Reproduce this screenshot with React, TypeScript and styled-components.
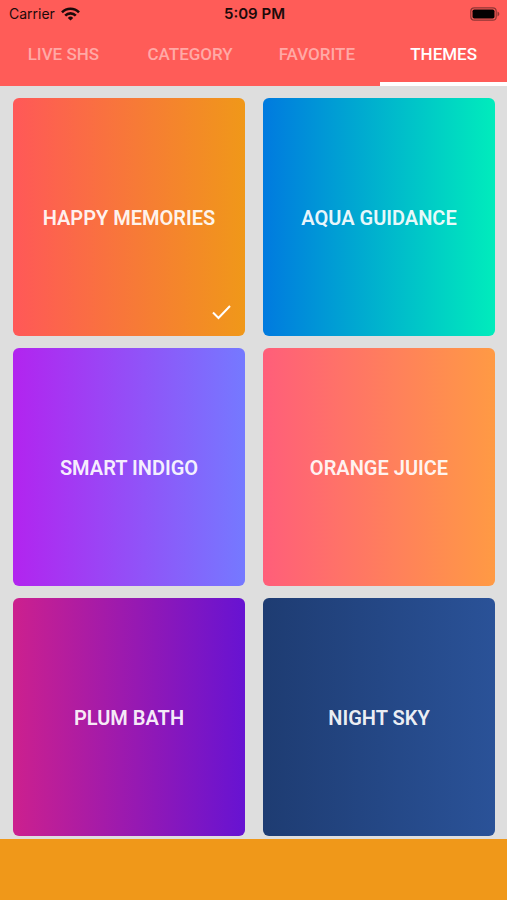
import React, { useState } from "react";
import styled, { createGlobalStyle } from "styled-components";

const GlobalStyle = createGlobalStyle`
  *, *::before, *::after { box-sizing: border-box; }
  body {
    margin: 0;
    background: #dedede;
    font-family: Roboto, "Liberation Sans", sans-serif;
  }
`;

const Screen = styled.div`
  display: flex;
  flex-direction: column;
  min-height: 100vh;
`;

const Header = styled.header`
  background: #ff5c58;
`;

const StatusBar = styled.div`
  display: grid;
  grid-template-columns: 1fr auto 1fr;
  align-items: center;
  height: 27px;
  padding: 0 7px 0 9px;
  color: #1c0a0a;
  font: 400 14px/18px Inter, "Liberation Sans", sans-serif;
`;

const Carrier = styled.div`
  display: flex;
  align-items: center;
  gap: 6px;
`;

const Clock = styled.time`
  font-size: 15px;
  font-weight: 600;
`;

const WifiIcon = styled.svg`
  display: block;
`;

const Battery = styled.svg`
  justify-self: end;
`;

const Tabs = styled.nav`
  display: grid;
  grid-template-columns: repeat(4, 1fr);
`;

const Tab = styled.button<{ $active: boolean }>`
  height: 59px;
  padding: 0 0 1px;
  border: 0;
  border-bottom: 4px solid ${(p) => (p.$active ? "#ffffff" : "transparent")};
  background: none;
  color: ${(p) => (p.$active ? "#ffffff" : "#ffa9a6")};
  font: 500 17px/20px Roboto, "Liberation Sans", sans-serif;
  white-space: nowrap;
  cursor: pointer;
`;

const ThemeGrid = styled.main`
  display: grid;
  flex: 1;
  grid-template-columns: repeat(2, 1fr);
  gap: 12px 18px;
  padding: 12px 12px 3px 13px;
`;

const ThemeCard = styled.button<{ $from: string; $to: string }>`
  position: relative;
  min-height: 238px;
  padding: 2px 0 0;
  border: 0;
  border-radius: 6px;
  background: linear-gradient(90deg, ${(p) => p.$from}, ${(p) => p.$to});
  color: rgba(255, 255, 255, 0.93);
  font: 600 20px/24px Roboto, "Liberation Sans", sans-serif;
  cursor: pointer;
`;

const Check = styled.svg`
  position: absolute;
  right: 14px;
  bottom: 16px;
`;

const Footer = styled.footer`
  height: 61px;
  background: #f09819;
`;

const tabs = ["LIVE SHS", "CATEGORY", "FAVORITE", "THEMES"];

const themes = [
  { name: "HAPPY MEMORIES", from: "#ff5858", to: "#f09819" },
  { name: "AQUA GUIDANCE", from: "#007adf", to: "#00ecbc" },
  { name: "SMART INDIGO", from: "#b224ef", to: "#7579ff" },
  { name: "ORANGE JUICE", from: "#ff5e7a", to: "#ff9a44" },
  { name: "PLUM BATH", from: "#cc208e", to: "#6713d2" },
  { name: "NIGHT SKY", from: "#1e3c72", to: "#2a5298" },
];

export default function App() {
  const [tab, setTab] = useState("THEMES");
  const [theme, setTheme] = useState("HAPPY MEMORIES");
  return (
    <Screen>
      <GlobalStyle />
      <Header>
        <StatusBar>
          <Carrier>
            Carrier
            <WifiIcon width="19" height="14" viewBox="0 0 19 14" fill="none" stroke="#1c0a0a" strokeWidth="2.6" aria-label="Wi-Fi">
              <path d="M1 5.3a12 12 0 0 1 17 0" />
              <path d="M4.2 8.6a7.5 7.5 0 0 1 10.6 0" />
              <path d="M6.8 10.9a3.9 3.9 0 0 1 5.4 0L9.5 13.6Z" fill="#1c0a0a" stroke="none" />
            </WifiIcon>
          </Carrier>
          <Clock>5:09 PM</Clock>
          <Battery width="30" height="14" viewBox="0 0 30 14" aria-label="Battery full">
            <rect x="0.8" y="0.8" width="25.4" height="12.4" rx="3.5" fill="none" stroke="#8f3634" strokeWidth="1.2" />
            <rect x="2.5" y="2.5" width="22" height="9" rx="1.8" fill="#050202" />
            <path d="M27.5 4.6v4.8c2.4-.8 2.4-4 0-4.8Z" fill="#8f3634" />
          </Battery>
        </StatusBar>
        <Tabs>
          {tabs.map((t) => (
            <Tab key={t} $active={t === tab} onClick={() => setTab(t)}>{t}</Tab>
          ))}
        </Tabs>
      </Header>
      <ThemeGrid>
        {themes.map((t) => (
          <ThemeCard key={t.name} $from={t.from} $to={t.to} onClick={() => setTheme(t.name)}>
            {t.name}
            {t.name === theme && (
              <Check width="19" height="16" viewBox="0 0 19 16" fill="none" stroke="#fff" strokeWidth="2" aria-label="Selected">
                <path d="M1 8.5 6.5 14 18 2" />
              </Check>
            )}
          </ThemeCard>
        ))}
      </ThemeGrid>
      <Footer />
    </Screen>
  );
}
